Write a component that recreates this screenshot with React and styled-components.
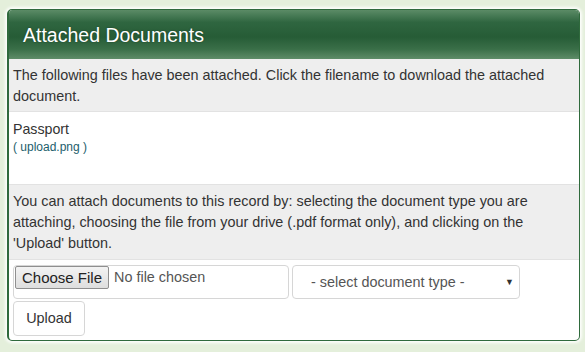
import React from "react";
import styled, { createGlobalStyle } from "styled-components";

const GlobalStyle = createGlobalStyle`
  html, body {
    margin: 0;
    padding: 0;
    background: #e4efdb;
    font-family: "Liberation Sans", Arial, sans-serif;
  }
  * { box-sizing: border-box; }
`;

const Page = styled.div`
  width: 585px;
  height: 352px;
  padding: 9px 5px 11px 7px;
`;

const Panel = styled.div`
  background: #fff;
  border: 1px solid #2f6a3c;
  border-left-width: 2px;
  border-radius: 5px;
  box-shadow: 0 0 3px 2px rgba(255, 255, 255, 0.9);
  overflow: hidden;
`;

const Header = styled.div`
  height: 49px;
  display: flex;
  align-items: center;
  padding: 2px 14px 0;
  background: linear-gradient(
    to bottom,
    #5b8b66 0%,
    #2f6640 25%,
    #265c36 55%,
    #3a6f48 80%,
    #5e8c68 100%
  );
  color: #fff;
  font-size: 19.5px;
  text-shadow: 0 0 2px rgba(0, 0, 0, 0.35);
`;

const Row = styled.div`
  background: ${(p) => (p.$shade ? "#eeeeee" : "#fff")};
  border-bottom: 1px solid #e2e2e2;
  padding: ${(p) => p.$pad || "5px 4px"};
  min-height: ${(p) => p.$h || "auto"};
  color: #333;
  font-size: 14.4px;
  line-height: 21px;
`;

const DocName = styled.div`
  font-size: 14.2px;
  line-height: 20px;
  color: #333;
`;

const FileLink = styled.a`
  display: block;
  font-size: 12px;
  line-height: 16px;
  color: #1d5e6c;
  text-decoration: none;
`;

const Form = styled.div`
  padding: 5px 4px 4px;
  display: flex;
  flex-direction: column;
  gap: 2px;
`;

const Line = styled.div`
  display: flex;
  gap: 3px;
`;

const FileBox = styled.div`
  width: 276px;
  height: 34px;
  border: 1px solid #d6d6d6;
  border-radius: 4px;
  padding: 0 1px;
  display: flex;
  align-items: flex-start;
  gap: 5px;
  font-size: 14.4px;
  color: #555;
`;

const ChooseBtn = styled.button`
  height: 23px;
  padding: 0 6px;
  font-family: "Liberation Sans", Arial, sans-serif;
  font-size: 15px;
  color: #222;
  background: linear-gradient(#f3f3f3, #dedede);
  border: 1px solid #8f8f8f;
  border-radius: 2px;
`;

const NoFile = styled.span`
  line-height: 22px;
`;

const Select = styled.div`
  width: 228px;
  height: 34px;
  border: 1px solid #d6d6d6;
  border-radius: 4px;
  display: flex;
  align-items: center;
  padding: 0 5px 0 18px;
  font-size: 14.4px;
  color: #555;
  justify-content: space-between;
`;

const Caret = styled.span`
  font-size: 9px;
  color: #333;
`;

const UploadBtn = styled.button`
  width: 72px;
  height: 35px;
  padding: 0 0 2px;
  background: #fff;
  border: 1px solid #d6d6d6;
  border-radius: 4px;
  font-family: "Liberation Sans", Arial, sans-serif;
  font-size: 14.4px;
  color: #333;
`;

export default function App() {
  return (
    <Page>
      <GlobalStyle />
      <Panel>
        <Header>Attached Documents</Header>
        <Row $shade $pad="6px 4px 4px">
          The following files have been attached. Click the filename to download the attached
          document.
        </Row>
        <Row $pad="7px 4px" $h="73px">
          <DocName>Passport</DocName>
          <FileLink href="#">( upload.png )</FileLink>
        </Row>
        <Row $shade $pad="6px 4px 5px">
          You can attach documents to this record by: selecting the document type you are
          attaching, choosing the file from your drive (.pdf format only), and clicking on the
          'Upload' button.
        </Row>
        <Form>
          <Line>
            <FileBox>
              <ChooseBtn>Choose File</ChooseBtn>
              <NoFile>No file chosen</NoFile>
            </FileBox>
            <Select>
              <span>- select document type -</span>
              <Caret>▼</Caret>
            </Select>
          </Line>
          <div>
            <UploadBtn>Upload</UploadBtn>
          </div>
        </Form>
      </Panel>
    </Page>
  );
}
